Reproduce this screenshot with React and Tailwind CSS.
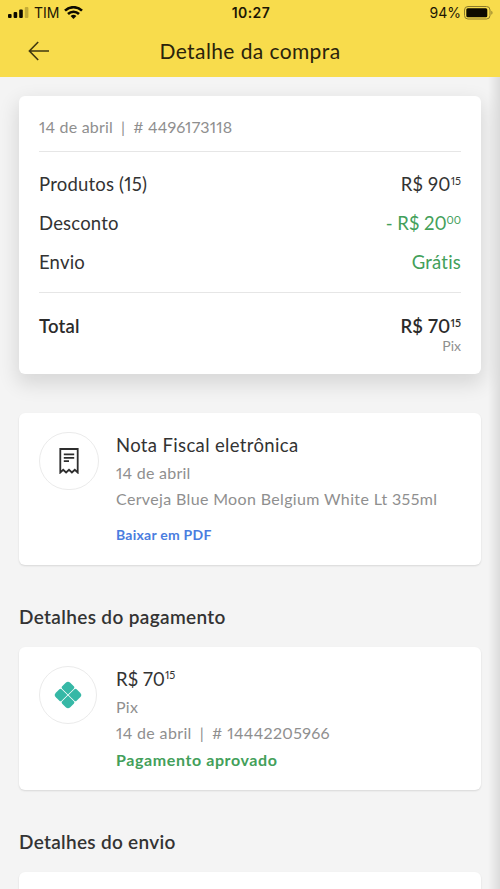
import { clsx } from "clsx"

const Price = ({ value, cents, className }) => {
  return (
    <span className={clsx("flex items-start", className)}>
      <span>{value}</span>
      <span className="text-[11px] leading-[17px] tracking-[0px]">{cents}</span>
    </span>
  )
}

const StatusBar = () => {
  return (
    <div className="grid grid-cols-3 items-center h-[25px] pl-2 pr-[6px] text-[14px] text-[#1c1704] font-['Inter',sans-serif]">
      <div className="flex items-center">
        <svg width="21" height="11" viewBox="0 0 21 11" fill="#0d0a00">
          <rect x="0" y="7" width="3.6" height="4" rx="1" />
          <rect x="5.6" y="5" width="3.6" height="6" rx="1" />
          <rect x="11.2" y="2.6" width="3.6" height="8.4" rx="1" />
          <rect x="16.8" y="0" width="3.6" height="11" rx="1" fill="#c3ab36" />
        </svg>
        <span className="ml-[5px] text-[14px]">TIM</span>
        <svg className="ml-[5px]" width="19" height="13" viewBox="0 0 19 13" fill="none" stroke="#0d0a00" strokeWidth="2.6">
          <path d="M1 4.6a12.3 12.3 0 0 1 17 0" />
          <path d="M4 8a8 8 0 0 1 11 0" />
          <path d="M9.5 12.9 6.6 10a4.3 4.3 0 0 1 5.8 0z" fill="#0d0a00" stroke="none" />
        </svg>
      </div>
      <span className="text-center font-semibold tracking-[0.4px]">10:27</span>
      <div className="flex items-center justify-end">
        <span className="mr-[3px]">94%</span>
        <svg width="30" height="14" viewBox="0 0 30 14">
          <rect x="0.5" y="0.5" width="25.5" height="12.5" rx="3.5" fill="none" stroke="#8c7b2a" />
          <rect x="2.3" y="2.3" width="21" height="9" rx="1.5" fill="#0d0a00" />
          <path d="M27.4 4.8a2.4 2.4 0 0 1 0 4z" fill="#8c7b2a" />
        </svg>
      </div>
    </div>
  )
}

const Header = () => {
  return (
    <header className="relative z-10 h-[77px] bg-[#f8dc4c]">
      <StatusBar />
      <div className="grid grid-cols-[80px_1fr_80px] items-center h-[51px]">
        <svg className="ml-7" width="22" height="20" viewBox="0 0 22 20" fill="none" stroke="#40380f" strokeWidth="1.6">
          <path d="M10.2 1 1.4 10l8.8 9M1.4 10H21" />
        </svg>
        <h1 className="text-center text-[21px] leading-[24px] tracking-[0.4px] text-[#2a230b]">
          Detalhe da compra
        </h1>
      </div>
    </header>
  )
}

const Row = ({ label, children }) => {
  return (
    <div className="flex justify-between">
      <span>{label}</span>
      {children}
    </div>
  )
}

const Summary = () => {
  return (
    <section className="h-[278px] rounded-md bg-white px-5 pt-[19px] shadow-[0_8px_20px_2px_rgba(0,0,0,0.12)]">
      <p className="h-9 text-[16px] leading-[24px] tracking-[0.2px] text-[#8f8f8f]">
        14 de abril<span className="mx-2">|</span># 4496173118
      </p>
      <div className="flex flex-col gap-[15px] h-[142px] pt-5 border-y border-[#e6e6e6] text-[18.5px] leading-[24px] tracking-[0.2px] text-[#333]">
        <Row label="Produtos (15)">
          <Price value="R$ 90" cents="15" />
        </Row>
        <Row label="Desconto">
          <Price value="- R$ 20" cents="00" className="tracking-[-0.05px] text-[#43a05a]" />
        </Row>
        <Row label="Envio">
          <span className="text-[#43a05a]">Grátis</span>
        </Row>
      </div>
      <div className="pt-[21px] text-[18.5px] leading-[24px] font-semibold tracking-[0.2px] text-[#2b2b2b]">
        <Row label="Total">
          <Price value="R$ 70" cents="15" />
        </Row>
      </div>
      <p className="text-right text-[14px] leading-[16px] text-[#8f8f8f]">Pix</p>
    </section>
  )
}

const InvoiceIcon = () => {
  return (
    <svg width="20" height="26" viewBox="0 0 20 26" fill="none" stroke="#2e2e2e" strokeWidth="1.8">
      <path d="M1.3 1H18.7V24.5L15.8 21.8 12.9 24.5 10 21.8 7.1 24.5 4.2 21.8 1.3 24.5Z" />
      <path d="M4.8 6.3H15.2M4.8 9.8H15.2M4.8 13.2H10" />
    </svg>
  )
}

const petal = "M.4.4H8.6a1.6 1.6 0 0 1 1.6 1.6V7A3.2 3.2 0 0 1 7 10.2H2A1.6 1.6 0 0 1 .4 8.6Z"

const PixIcon = () => {
  return (
    <svg width="28" height="28" viewBox="-14 -14 28 28" fill="#36b8a6">
      {[45, 135, 225, 315].map(angle => (
        <path key={angle} d={petal} transform={`rotate(${angle})`} />
      ))}
    </svg>
  )
}

const Card = ({ icon, iconClass, className, children }) => {
  return (
    <section className={clsx("flex rounded-md bg-white px-5 pt-[19px] shadow-[0_1px_2px_rgba(0,0,0,0.12)]", className)}>
      <div className="w-[77px] shrink-0">
        <div className={clsx("flex items-center justify-center rounded-full border border-[#ebebeb]", iconClass)}>
          {icon}
        </div>
      </div>
      <div className="text-[16px] leading-[27px] tracking-[0.25px] text-[#8f8f8f]">{children}</div>
    </section>
  )
}

const App = () => {
  return (
    <div className="relative w-[500px] h-[889px] overflow-hidden bg-[#f4f4f4] font-['Lato',sans-serif] proportional-nums">
      <Header />
      <div className="absolute top-[77px] right-0 bottom-0 w-3 bg-linear-to-l from-black/10 to-transparent" />
      <main className="px-[19px] pt-[19px]">
        <Summary />

        <Card
          className="mt-[39px] h-[152px]"
          iconClass="w-[60px] h-[58px]"
          icon={<InvoiceIcon />}
        >
          <h2 className="text-[18.5px] tracking-[0.35px] text-[#333]">Nota Fiscal eletrônica</h2>
          <p>14 de abril</p>
          <p className="-mt-px tracking-[0.35px]">Cerveja Blue Moon Belgium White Lt 355ml</p>
          <a className="block mt-[9px] text-[14px] font-bold text-[#4a7de0]">Baixar em PDF</a>
        </Card>

        <h2 className="mt-10 text-[19px] leading-[24px] font-semibold tracking-[0.35px] text-[#333]">
          Detalhes do pagamento
        </h2>
        <Card
          className="mt-[18px] h-[143px]"
          iconClass="w-[58px] h-[58px]"
          icon={<PixIcon />}
        >
          <Price value="R$ 70" cents="15" className="text-[18.5px] tracking-[0.05px] text-[#333]" />
          <p>Pix</p>
          <p className="-mt-px tracking-[0.35px]">
            14 de abril<span className="mx-2">|</span># 14442205966
          </p>
          <p className="font-bold tracking-[0.6px] text-[#43a05a]">Pagamento aprovado</p>
        </Card>

        <h2 className="mt-10 text-[19px] leading-[24px] font-semibold tracking-[0.3px] text-[#333]">
          Detalhes do envio
        </h2>
        <div className="mt-[18px] h-20 rounded-md bg-white shadow-[0_1px_2px_rgba(0,0,0,0.12)]" />
      </main>
    </div>
  )
}
export default App;
